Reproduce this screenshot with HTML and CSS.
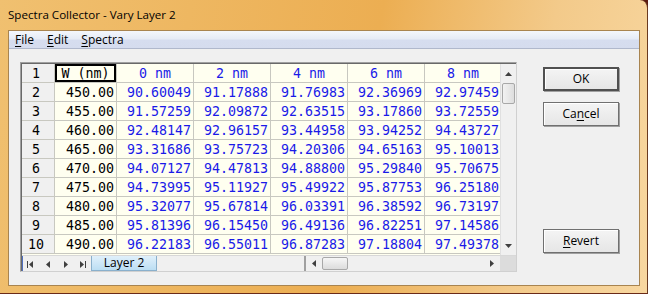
FILE: index.html
```html
<!DOCTYPE html>
<html>
<head>
<meta charset="utf-8">
<link rel="stylesheet" href="styles.css">
</head>
<body>
<div class="window">
  <div class="titlebar">Spectra Collector - Vary Layer 2</div>
  <div class="client">
    <div class="menubar">
      <span class="menu"><u>F</u>ile</span>
      <span class="menu"><u>E</u>dit</span>
      <span class="menu"><u>S</u>pectra</span>
    </div>
    <div class="content">
      <div class="sheet">
        <div class="sheet-main">
          <div class="cells">
            <div class="rh">1</div><div class="c hdr wcol">W (nm)</div><div class="c hdr">0 nm</div><div class="c hdr">2 nm</div><div class="c hdr">4 nm</div><div class="c hdr">6 nm</div><div class="c hdr">8 nm</div>
            <div class="rh">2</div><div class="c w">450.00</div><div class="c v">90.60049</div><div class="c v">91.17888</div><div class="c v">91.76983</div><div class="c v">92.36969</div><div class="c v">92.97459</div>
            <div class="rh">3</div><div class="c w">455.00</div><div class="c v">91.57259</div><div class="c v">92.09872</div><div class="c v">92.63515</div><div class="c v">93.17860</div><div class="c v">93.72559</div>
            <div class="rh">4</div><div class="c w">460.00</div><div class="c v">92.48147</div><div class="c v">92.96157</div><div class="c v">93.44958</div><div class="c v">93.94252</div><div class="c v">94.43727</div>
            <div class="rh">5</div><div class="c w">465.00</div><div class="c v">93.31686</div><div class="c v">93.75723</div><div class="c v">94.20306</div><div class="c v">94.65163</div><div class="c v">95.10013</div>
            <div class="rh">6</div><div class="c w">470.00</div><div class="c v">94.07127</div><div class="c v">94.47813</div><div class="c v">94.88800</div><div class="c v">95.29840</div><div class="c v">95.70675</div>
            <div class="rh">7</div><div class="c w">475.00</div><div class="c v">94.73995</div><div class="c v">95.11927</div><div class="c v">95.49922</div><div class="c v">95.87753</div><div class="c v">96.25180</div>
            <div class="rh">8</div><div class="c w">480.00</div><div class="c v">95.32077</div><div class="c v">95.67814</div><div class="c v">96.03391</div><div class="c v">96.38592</div><div class="c v">96.73197</div>
            <div class="rh">9</div><div class="c w">485.00</div><div class="c v">95.81396</div><div class="c v">96.15450</div><div class="c v">96.49136</div><div class="c v">96.82251</div><div class="c v">97.14586</div>
            <div class="rh">10</div><div class="c w">490.00</div><div class="c v">96.22183</div><div class="c v">96.55011</div><div class="c v">96.87283</div><div class="c v">97.18804</div><div class="c v">97.49378</div>
          </div>
          <div class="vscroll">
            <div class="arrow"><svg width="7" height="4" viewBox="0 0 7 4"><path d="M0 4 L3.5 0 L7 4 Z" fill="#404040"/></svg></div>
            <div class="vthumb"></div>
            <div class="vtrack"></div>
            <div class="arrow"><svg width="7" height="4" viewBox="0 0 7 4"><path d="M0 0 L3.5 4 L7 0 Z" fill="#404040"/></svg></div>
          </div>
        </div>
        <div class="sheet-bottom">
          <div class="nav">
            <svg width="68" height="16" viewBox="0 0 68 16">
              <rect x="4" y="5" width="1" height="7" fill="#404040"/>
              <path d="M10 5 L6 8.5 L10 12 Z" fill="#404040"/>
              <path d="M27 5 L23 8.5 L27 12 Z" fill="#404040"/>
              <path d="M41 5 L45 8.5 L41 12 Z" fill="#404040"/>
              <path d="M57 5 L61 8.5 L57 12 Z" fill="#404040"/>
              <rect x="62" y="5" width="1" height="7" fill="#404040"/>
            </svg>
          </div>
          <div class="tab">Layer 2</div>
          <div class="tabspace"></div>
          <div class="hscroll">
            <div class="harrow"><svg width="4" height="7" viewBox="0 0 4 7"><path d="M4 0 L0 3.5 L4 7 Z" fill="#404040"/></svg></div>
            <div class="hthumb"></div>
            <div class="htrack"></div>
            <div class="harrow"><svg width="4" height="7" viewBox="0 0 4 7"><path d="M0 0 L4 3.5 L0 7 Z" fill="#404040"/></svg></div>
          </div>
          <div class="corner"></div>
        </div>
      </div>
      <div class="buttons">
        <div class="btn default">OK</div>
        <div class="btn">Ca<u>n</u>cel</div>
        <div class="spacer"></div>
        <div class="btn"><u>R</u>evert</div>
      </div>
    </div>
  </div>
</div>
</body>
</html>
```
FILE: styles.css
```css
* { box-sizing: border-box; }
html, body { margin: 0; padding: 0; }
body { width: 648px; height: 294px; overflow: hidden; background: #5a1a10; }

.window {
  width: 648px;
  height: 294px;
  background: linear-gradient(100deg, #f0c070 0%, #ecae52 55%, #f3ca8a 80%, #f8d7a0 100%);
  border-radius: 0 8px 0 0;
  border-right: 1px solid #6a3a20;
  border-bottom: 1px solid #6a2a18;
  padding: 0 7px 7px 8px;
  display: flex;
  flex-direction: column;
  font-family: "Open Sans", "Noto Sans", sans-serif;
}
.titlebar {
  height: 30px;
  font-size: 11.6px;
  line-height: 30px;
  color: #000;
  padding-left: 0;
}
.client {
  flex: 1;
  background: #f0f0f0;
  border: 1px solid #a88450;
  display: flex;
  flex-direction: column;
}
.menubar {
  height: 18px;
  background: linear-gradient(#f4f7fc 0%, #e6ebf6 45%, #d6ddef 55%, #d5dcee 100%);
  border-bottom: 1px solid #b0b8cc;
  display: flex;
  align-items: center;
  padding-left: 6px;
  font-size: 12px;
  font-family: "Open Sans", "Noto Sans", sans-serif;
}
.menu { margin-right: 13px; line-height: 16px; }
.menu u { text-decoration-thickness: 1px; text-underline-offset: 2px; }

.content {
  display: flex;
  padding: 13px 0 0 11px;
}

.sheet {
  width: 497px;
  height: 210px;
  border-top: 1px solid #a0a0a0;
  border-left: 1px solid #a0a0a0;
  border-right: 1px solid #d0d0d0;
  border-bottom: 1px solid #d0d0d0;
  background: #f0f0f0;
  box-shadow: inset 1px 1px 0 #696969;
  padding: 1px 0 0 1px;
  display: flex;
  flex-direction: column;
}
.sheet-main { display: flex; height: 192px; }
.cells {
  display: grid;
  grid-template-columns: 33px 62px 77px 77px 77px 77px 77px;
  grid-auto-rows: 19px;
  width: 480px;
  overflow: hidden;
  font-family: "DejaVu Sans Mono", "Liberation Mono", monospace;
  font-size: 13.3px;
  background: #fffff0;
}
.cells > div {
  border-right: 1px solid #c8c8c0;
  border-bottom: 1px solid #c8c8c0;
  line-height: 18px;
  white-space: nowrap;
  overflow: hidden;
}
.rh {
  background: #f0f0f0;
  color: #000;
  text-align: center;
  padding-right: 4px;
  padding-top: 1px;
}
.c { background: #fffff0; text-align: right; padding-right: 2px; padding-top: 1px; }
.hdr { text-align: center; color: #1a1ae8; padding-right: 0; }
.wcol.hdr { color: #000; box-shadow: inset 0 0 0 2px #000; }
.w { color: #000; }
.v { color: #1a1ae8; }

.vscroll {
  width: 16px;
  display: flex;
  flex-direction: column;
  background: #f0f0f0;
  border-left: 1px solid #e0e0e0;
}
.arrow { height: 19px; display: flex; align-items: center; justify-content: center; }
.vthumb {
  height: 21px;
  margin: 0 1px;
  border: 1px solid #a8a8a8;
  border-radius: 2px;
  background: linear-gradient(90deg, #f2f2f2, #dedede);
}
.vtrack { flex: 1; }

.sheet-bottom {
  display: flex;
  height: 16px;
  border-top: 1px solid #d8d8d8;
  background: #f0f0f0;
}
.nav {
  width: 69px;
  border-left: 1px solid #5070c0;
  display: flex;
  align-items: center;
}
.tab {
  width: 66px;
  font-size: 12px;
  line-height: 14px;
  text-align: center;
  background: linear-gradient(#e0f0fb, #bcdef3);
  border: 1px solid #8ab0cc;
  border-top: none;
  color: #000;
}
.tabspace { width: 149px; border-right: 2px solid #a0a0a0; }
.hscroll { flex: 1; display: flex; align-items: stretch; }
.harrow { width: 16px; display: flex; align-items: center; justify-content: center; }
.hthumb {
  width: 26px;
  margin: 1px 0;
  border: 1px solid #a8a8a8;
  border-radius: 2px;
  background: linear-gradient(#f6f6f6, #dcdcdc);
}
.htrack { flex: 1; }
.corner { width: 16px; background: #dcdcdc; }

.buttons {
  display: flex;
  flex-direction: column;
  margin-left: 26px;
  padding-top: 5px;
}
.btn {
  width: 76px;
  height: 24px;
  border: 1px solid #707070;
  border-radius: 0;
  background: linear-gradient(#f4f4f4, #e6e6e6);
  box-shadow: inset 1px 1px 0 #ffffff, 1px 1px 0 #a0a0a0;
  font-family: "Open Sans", "Noto Sans", sans-serif;
  font-size: 12px;
  line-height: 22px;
  text-align: center;
  color: #000;
  margin-bottom: 11px;
}
.btn.default { border: 2px solid #505050; line-height: 20px; }
.btn u { text-underline-offset: 2px; }
.spacer { height: 92px; }
```
